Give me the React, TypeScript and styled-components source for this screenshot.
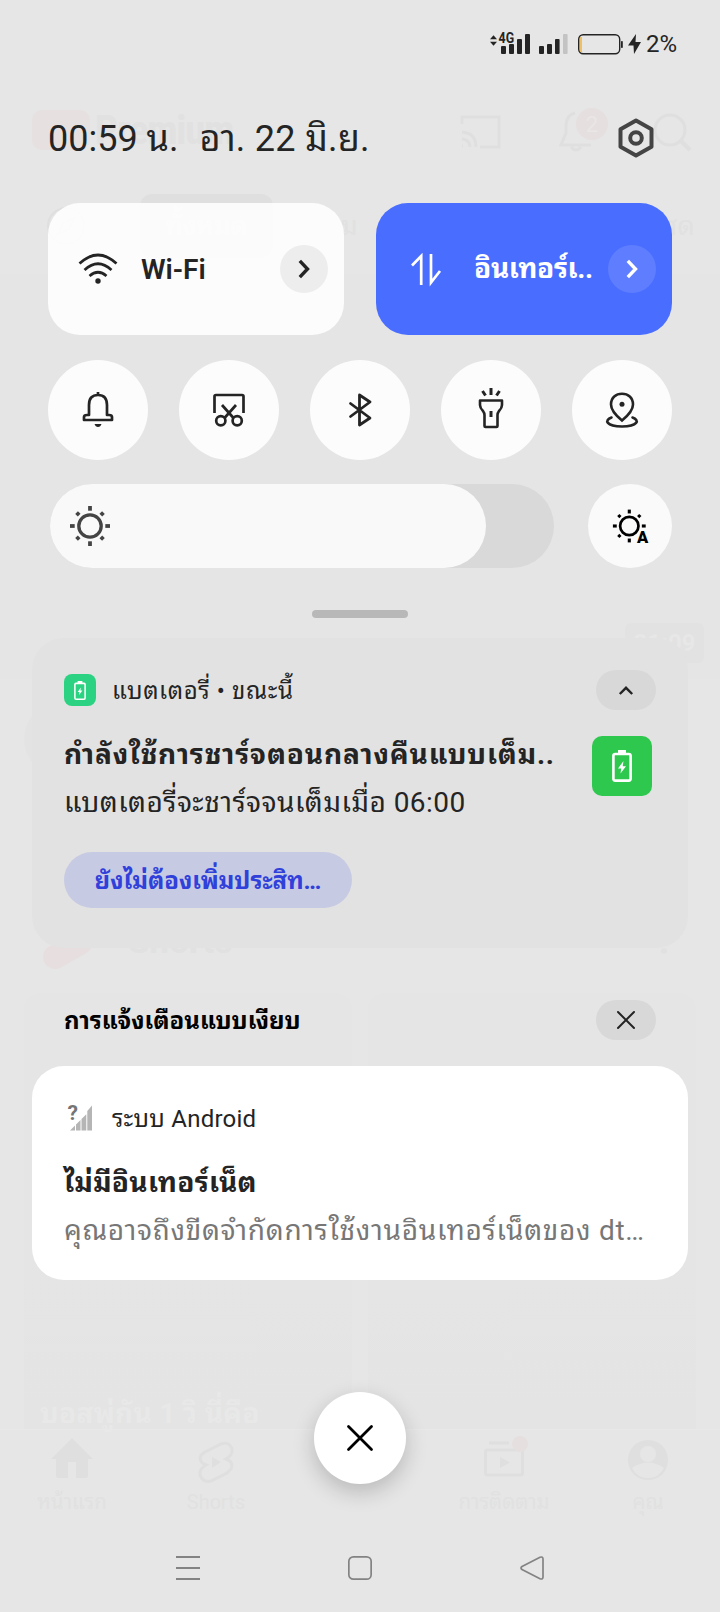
import React from 'react';
import styled, { createGlobalStyle } from 'styled-components';

const GlobalStyle = createGlobalStyle`
  * { box-sizing: border-box; }
  body {
    margin: 0;
    background: #e6e6e6;
    font-family: Roboto, 'Noto Looped Thai', 'Noto Sans Thai Looped', 'Noto Sans Thai', 'Noto Sans', sans-serif;
    color: #242424;
  }
  svg { display: block; flex: none; overflow: visible; }
`;

const Screen = styled.main`
  position: relative;
  width: 720px;
  height: 1612px;
  overflow: hidden;
  background: #e6e6e6;
`;

const Label = styled.span<{ $size: number; $weight?: number; $track?: number; $color?: string }>`
  display: block;
  white-space: nowrap;
  font-size: ${(p) => p.$size}px;
  font-weight: ${(p) => p.$weight ?? 400};
  letter-spacing: ${(p) => p.$track ?? 0}px;
  line-height: 40px;
  height: 40px;
  color: ${(p) => p.$color ?? 'inherit'};
`;

/* ---------- dimmed application behind the shade ---------- */

const Backdrop = styled.div`
  position: absolute;
  inset: 0;
  display: flex;
  flex-direction: column;
  color: #e1e1e1;
`;

const AppBar = styled.div`
  display: flex;
  align-items: center;
  height: 84px;
  margin-top: 88px;
  padding-left: 32px;
`;

const AppLogo = styled.div`
  width: 58px;
  height: 40px;
  border-radius: 10px;
  background: #e7e0e0;
  margin-right: 5px;
`;

const Brand = styled.div`
  width: 365px;
  font: 700 41px/40px 'Roboto Condensed', Roboto, sans-serif;
  letter-spacing: -1.3px;
`;

const ChipBar = styled.div`
  display: flex;
  align-items: center;
  height: 102px;
  padding: 6px 0 0 46px;
`;

const ActiveChip = styled.div`
  display: flex;
  align-items: center;
  justify-content: center;
  width: 133px;
  height: 64px;
  margin: 0 42px 0 54px;
  border-radius: 12px;
  background: #dfdfdf;
  color: #e4e4e4;
`;

const ChipGap = styled.div`
  width: 304px;
`;

const Video = styled.div`
  display: flex;
  align-items: flex-end;
  justify-content: flex-end;
  height: 405px;
  padding: 0 16px 16px;
  background: #e5e5e5;
`;

const Duration = styled.div`
  display: flex;
  align-items: center;
  justify-content: center;
  width: 79px;
  height: 40px;
  border-radius: 6px;
  background: #e2e2e2;
  color: #e7e7e7;
`;

const Channel = styled.div`
  height: 235px;
  padding: 24px;
`;

const Avatar = styled.div`
  width: 72px;
  height: 72px;
  border-radius: 50%;
  background: #e3e3e3;
`;

const ShelfTitle = styled.div`
  display: flex;
  align-items: flex-start;
  height: 79px;
  padding-left: 42px;
`;

const Shelf = styled.div`
  display: grid;
  grid-template-columns: 328px 328px;
  gap: 16px;
  height: 436px;
  padding: 0 24px;
`;

const Thumb = styled.div`
  display: flex;
  align-items: flex-end;
  padding: 0 16px;
  border-radius: 16px 16px 0 0;
  background: linear-gradient(#e5e5e5 60%, #e4e4e4);
  color: #e8e8e8;
`;

const ThumbTitle = styled.div`
  margin-bottom: -5px;
`;

const TabBar = styled.div`
  display: grid;
  grid-template-columns: repeat(5, 1fr);
  border-top: 1px solid #e8e8e8;
  padding-top: 8px;
`;

const Tab = styled.div`
  display: flex;
  flex-direction: column;
  align-items: center;
`;

/* ---------- notification shade ---------- */

const Shade = styled.div`
  position: relative;
  display: flex;
  flex-direction: column;
  height: 100%;
`;

const StatusBar = styled.div`
  display: flex;
  align-items: flex-start;
  height: 64px;
  padding: 33px 0 0 490px;
`;

const BatteryLevel = styled.div`
  margin: -9px 0 0 5px;
`;

const Header = styled.header`
  display: flex;
  align-items: center;
  justify-content: space-between;
  height: 80px;
  margin-top: 34px;
  padding: 0 66px 0 48px;
`;

const DateTime = styled.div`
  display: flex;
  gap: 21px;
  padding-top: 2px;
`;

const Tiles = styled.section`
  display: grid;
  grid-template-columns: 296px 296px;
  gap: 32px;
  padding: 0 48px;
  margin-top: 25px;
`;

const Tile = styled.div<{ $active?: boolean }>`
  display: flex;
  align-items: center;
  height: 132px;
  padding: 0 16px 0 28px;
  border-radius: 32px;
  background: ${(p) => (p.$active ? '#496dff' : 'rgba(255, 255, 255, 0.88)')};
  color: ${(p) => (p.$active ? '#fff' : '#242424')};
`;

const TileLabel = styled.div<{ $start: number; $top?: number }>`
  flex: 1;
  min-width: 0;
  padding: ${(p) => p.$top ?? 0}px 0 0 ${(p) => p.$start}px;
`;

const TileMore = styled.div<{ $active?: boolean }>`
  display: grid;
  place-items: center;
  width: 48px;
  height: 48px;
  border-radius: 50%;
  background: ${(p) => (p.$active ? '#5f7eff' : '#ededed')};
`;

const Toggles = styled.section`
  display: flex;
  justify-content: space-between;
  padding: 0 48px;
  margin-top: 25px;
`;

const Round = styled.div<{ $size: number }>`
  display: grid;
  place-items: center;
  width: ${(p) => p.$size}px;
  height: ${(p) => p.$size}px;
  border-radius: 50%;
  background: ${(p) => (p.$size > 90 ? '#fcfcfc' : '#fafafa')};
`;

const Brightness = styled.section`
  display: flex;
  justify-content: space-between;
  margin-top: 24px;
  padding: 0 48px 0 50px;
`;

const Track = styled.div`
  width: 504px;
  height: 84px;
  border-radius: 42px;
  background: #d9d9d9;
`;

const Fill = styled.div`
  display: flex;
  align-items: center;
  width: 436px;
  height: 84px;
  padding-left: 20px;
  border-radius: 42px;
  background: #f9f9f9;
`;

const Handle = styled.div`
  width: 96px;
  height: 8px;
  margin: 42px auto 0;
  border-radius: 4px;
  background: #b8b8b8;
`;

const Card = styled.article<{ $solid?: boolean }>`
  margin: ${(p) => (p.$solid ? '26px' : '20px')} 32px 0;
  height: ${(p) => (p.$solid ? '214px' : '310px')};
  padding: 32px;
  border-radius: 32px;
  background: ${(p) => (p.$solid ? '#fff' : '#e2e2e2')};
`;

const CardHead = styled.div`
  display: flex;
  align-items: center;
  height: 40px;
`;

const Source = styled.div`
  flex: 1;
  padding: 2px 0 0 16px;
`;

const AppIcon = styled.div<{ $large?: boolean }>`
  display: grid;
  place-items: center;
  flex: none;
  width: ${(p) => (p.$large ? 60 : 32)}px;
  height: ${(p) => (p.$large ? 60 : 32)}px;
  margin-top: ${(p) => (p.$large ? 1 : 0)}px;
  border-radius: ${(p) => (p.$large ? 10 : 8)}px;
  background: ${(p) => (p.$large ? '#2dc84d' : '#2bd281')};
`;

const Pill = styled.div`
  display: grid;
  place-items: center;
  width: 60px;
  height: 40px;
  border-radius: 20px;
  background: #d8d8d8;
`;

const CardBody = styled.div`
  display: flex;
  justify-content: space-between;
  margin-top: 25px;
  padding-right: 4px;
`;

const Lines = styled.div`
  display: flex;
  flex-direction: column;
  gap: 8px;
`;

const Action = styled.div`
  display: flex;
  align-items: center;
  justify-content: center;
  width: 288px;
  height: 56px;
  margin-top: 29px;
  padding-top: 2px;
  border-radius: 28px;
  background: #c6cae3;
`;

const SilentHead = styled.div`
  display: flex;
  align-items: center;
  justify-content: space-between;
  height: 40px;
  margin-top: 52px;
  padding: 0 64px;
`;

const SilentTitle = styled.div`
  padding-top: 2px;
`;

const CloseAll = styled.div`
  display: grid;
  place-items: center;
  width: 92px;
  height: 92px;
  margin: 112px auto 0;
  border-radius: 50%;
  background: #fff;
  box-shadow: 0 8px 22px rgba(0, 0, 0, 0.2);
`;

const SystemNav = styled.nav`
  display: flex;
  justify-content: space-between;
  margin-top: 72px;
  padding: 0 176px;
`;

const Cross = ({ size, width }: { size: number; width: number }) => (
  <svg width={size} height={size} viewBox={`0 0 ${size} ${size}`} fill="none" stroke="currentColor" strokeWidth={width} strokeLinecap="round">
    <path d={`M1 1L${size - 1} ${size - 1}M${size - 1} 1L1 ${size - 1}`} />
  </svg>
);

const Chevron = () => (
  <svg width="12" height="20" viewBox="0 0 12 20" fill="none" stroke="currentColor" strokeWidth="3.4">
    <path d="M1.800 1.900L9.500 10L1.800 18.100" />
  </svg>
);

const RAYS = [0, 45, 90, 135, 180, 225, 270, 315];

const Sun = ({ auto }: { auto?: boolean }) => (
  <svg width="40" height="40" viewBox="-20 -20 40 40" fill="none" stroke={auto ? '#000' : '#444'} strokeWidth="3.3">
    <g transform={auto ? 'translate(-.7 0) scale(.82)' : undefined}>
      <circle r="11.2" />
      {RAYS.filter((a) => !(auto && a === 135)).map((a) => (
        <path key={a} d={a % 90 ? 'M0 -15.3V-19' : 'M0 -15.3V-20'} strokeWidth="3.8" transform={`rotate(${a})`} />
      ))}
    </g>
    {auto && (
      <text x="7" y="16.500" fontSize="16.500" fontWeight="900" fill="#000" stroke="none">A</text>
    )}
  </svg>
);

const BatteryIcon = ({ large }: { large?: boolean }) => (
  <svg width={large ? 20 : 12} height={large ? 32 : 19} viewBox="0 0 20 32" fill="none" stroke="#fff" strokeWidth="2.6">
    <rect x="1.4" y="4" width="17.2" height="26.6" rx="1.8" />
    <path d="M6 1.8H14" strokeWidth="3.6" />
    <path d="M11.5 11L6 18.4H9.2L8.5 23.5L14 16.2H10.7Z" fill="#fff" stroke="none" />
  </svg>
);

const StatusIcons = () => (
  <svg width="151" height="22" viewBox="490 33 151 22" fill="#242424">
    <path d="M490 40L493.500 36L497 40ZM490 42.500H497L493.500 46.500Z" transform="translate(0 -.7)" />
    <text x="498.600" y="42.700" fontSize="14" fontWeight="700" textLength="15.500" lengthAdjust="spacingAndGlyphs">4G</text>
    <rect x="501" y="46" width="5" height="8" rx="1" />
    <rect x="509" y="44" width="5" height="10" rx="1" />
    <rect x="517" y="39" width="5" height="15" rx="1" />
    <rect x="525" y="34" width="5" height="20" rx="1" />
    <rect x="539" y="46" width="5" height="8" rx="1" />
    <rect x="547" y="44" width="5" height="10" rx="1" />
    <rect x="555" y="39" width="4.600" height="15" rx="1" />
    <rect x="563" y="34" width="4.600" height="20" rx="1" fill="#c3c3c3" />
    <rect x="578.700" y="34.700" width="41" height="19" rx="4.500" fill="none" stroke="#242424" strokeWidth="1.400" />
    <rect x="580" y="37" width="2" height="15" fill="#eec166" />
    <rect x="621" y="41" width="1.800" height="7" rx=".8" />
    <path d="M636 34L628 45.500H633.500L634 54L641 42H635.500Z" />
  </svg>
);

const App = () => (
  <Screen lang="th">
    <GlobalStyle />
    <Backdrop aria-hidden>
      <AppBar>
        <AppLogo />
        <Brand>Premium</Brand>
        <svg width="260" height="44" viewBox="460 106 260 44" fill="none" stroke="#dfdfdf" strokeWidth="3">
          <path d="M462 122V115H499V145H480M462 144H463M462 137Q470 138 470 145M462 130Q476 131 476 145" />
          <path d="M575 111Q566 113 566 124V131L561 143H591M571 145Q576 151 581 145" />
          <circle cx="592" cy="122" r="16" fill="#e6dfdf" stroke="none" />
          <text x="592" y="130" fontSize="22" fill="#e9e6e6" stroke="none" textAnchor="middle">2</text>
          <circle cx="670" cy="128" r="15" />
          <path d="M680 138L690 148" strokeWidth="4" />
        </svg>
      </AppBar>
      <ChipBar>
        <svg width="40" height="40" viewBox="-20 -20 40 40" fill="none" stroke="#dfdfdf" strokeWidth="2">
          <circle r="18" />
          <path d="M9 -9L3 3L-9 9L-3 -3Z" />
        </svg>
        <ActiveChip><Label $size={26} $weight={500}>ทั้งหมด</Label></ActiveChip>
        <Label $size={27}>เกม</Label>
        <ChipGap />
        <Label $size={27}>สด</Label>
      </ChipBar>
      <Video><Duration><Label $size={24} $weight={700}>21:09</Label></Duration></Video>
      <Channel><Avatar /></Channel>
      <ShelfTitle>
        <svg width="88" height="60" viewBox="42 914 88 60"><path d="M55 957L80 943" stroke="#e7dfdf" strokeWidth="24" strokeLinecap="round" /></svg>
        <svg width="540" height="60" viewBox="130 914 540 60" fill="#e1e1e1">
          <text x="128" y="952.500" fontSize="35" fontWeight="700">Shorts</text>
          <circle cx="664" cy="951" r="3" />
        </svg>
      </ShelfTitle>
      <Shelf>
        <Thumb><ThumbTitle><Label $size={28} $weight={700} $track={0.3}>บอสพู่กัน 1 วิ นี่คือ</Label></ThumbTitle></Thumb>
        <Thumb />
      </Shelf>
      <TabBar>
        <Tab>
          <svg width="42" height="44" viewBox="0 0 42 44" fill="#dfdfdf"><path d="M21 0L42 21H37V38Q37 40 35 40H25V24H17V40H7Q5 40 5 38V21H0Z" /></svg>
          <Label $size={20.5}>หน้าแรก</Label>
        </Tab>
        <Tab>
          <svg width="36" height="44" viewBox="0 0 36 44" fill="none" stroke="#dfdfdf" strokeWidth="3">
            <path d="M7 14L23 6Q31 3 34 11Q35 17 28 21Q36 24 33 31L29 35L13 43Q5 45 2 37Q1 31 8 27Q0 24 3 17Z" />
            <path d="M14 19V30L23 24Z" fill="#dfdfdf" stroke="none" />
          </svg>
          <Label $size={20}>Shorts</Label>
        </Tab>
        <Tab />
        <Tab>
          <svg width="40" height="44" viewBox="0 0 40 44" fill="none" stroke="#dfdfdf" strokeWidth="3">
            <rect x="1.500" y="12" width="37" height="25" rx="2" />
            <path d="M5 5H25" />
            <path d="M16 19V30L26 24.500Z" fill="#dfdfdf" stroke="none" />
            <circle cx="36" cy="6" r="8" fill="#e6dfdf" stroke="none" />
          </svg>
          <Label $size={20.5}>การติดตาม</Label>
        </Tab>
        <Tab>
          <svg width="40" height="44" viewBox="0 0 40 44" fill="#dfdfdf">
            <circle cx="20" cy="22" r="20" />
            <circle cx="20" cy="16" r="8" fill="#e6e6e6" />
            <path d="M4 30Q20 19 36 30Q31 40 20 40Q9 40 4 30Z" fill="#e6e6e6" />
          </svg>
          <Label $size={20.5}>คุณ</Label>
        </Tab>
      </TabBar>
    </Backdrop>

    <Shade>
      <StatusBar>
        <StatusIcons />
        <BatteryLevel><Label $size={24}>2%</Label></BatteryLevel>
      </StatusBar>
      <Header>
        <DateTime>
          <Label $size={36}>00:59 น.</Label>
          <Label $size={36} $track={0.25}>อา. 22 มิ.ย.</Label>
        </DateTime>
        <svg width="36" height="40" viewBox="0 0 36 40" fill="none" stroke="#444" strokeWidth="4" strokeLinejoin="round">
          <path d="M18 2.500L33.500 11.200V28.800L18 37.500L2.500 28.800V11.200Z" />
          <circle cx="18" cy="20" r="5.800" />
        </svg>
      </Header>

      <Tiles>
        <Tile>
          <svg width="44" height="36" viewBox="0 0 44 36" fill="none" stroke="#242424" strokeWidth="2.700">
            <path d="M3.500 12.500Q22 -4.500 40.500 12.500M8.500 19Q22 6.500 35.500 19M13.500 25Q22 17.500 30.500 25" />
            <circle cx="22" cy="30" r="2.700" fill="#242424" stroke="none" />
          </svg>
          <TileLabel $start={21} $top={2}><Label $size={28} $weight={600}>Wi-Fi</Label></TileLabel>
          <TileMore><Chevron /></TileMore>
        </Tile>
        <Tile $active>
          <svg width="44" height="36" viewBox="0 0 44 36" fill="none" stroke="#fff" strokeWidth="2.700">
            <path d="M8 14.500L17.200 5V34M27 3V31.500L36 20" />
          </svg>
          <TileLabel $start={26}><Label $size={28} $weight={700} $track={-0.35}>อินเทอร์เ..</Label></TileLabel>
          <TileMore $active><Chevron /></TileMore>
        </Tile>
      </Tiles>

      <Toggles>
        <Round $size={100}>
          <svg width="32" height="36" viewBox="0 0 32 36" fill="none" stroke="#242424" strokeWidth="2.700" strokeLinejoin="round">
            <path d="M16 0V3M7 23V13Q7 3 16 3Q25 3 25 13V23H27Q30 23 30 25V28H2V25Q2 23 5 23Z" />
            <path d="M12.500 32H19.500Q18.500 35 16 35Q13.500 35 12.500 32Z" fill="#242424" stroke="none" />
          </svg>
        </Round>
        <Round $size={100}>
          <svg width="34" height="36" viewBox="0 0 34 36" fill="none" stroke="#242424" strokeWidth="2.700">
            <path d="M2.500 21V4.500Q2.500 3 4 3H30Q31.500 3 31.500 4.500V21M10 13L21.500 26M24 13L12.500 26" />
            <circle cx="8.800" cy="28.700" r="4.600" />
            <circle cx="25.200" cy="28.700" r="4.600" />
          </svg>
        </Round>
        <Round $size={100}>
          <svg width="24" height="36" viewBox="0 0 24 36" fill="none" stroke="#242424" strokeWidth="2.800" strokeLinejoin="round" strokeLinecap="round">
            <path d="M2.500 11.500L22 26L11.500 33V3L22 10L2.500 24.500" />
          </svg>
        </Round>
        <Round $size={100}>
          <svg width="26" height="42" viewBox="0 2 26 42" fill="none" stroke="#242424" strokeWidth="2.600" strokeLinejoin="round">
            <path d="M2 13.500H24V18Q24 21 21 24Q19.500 26 19.500 28V39Q19.500 40 18.500 40H7.500Q6.500 40 6.500 39V28Q6.500 26 5 24Q2 21 2 18Z" />
            <path d="M13 24V30M13 1V8M4.500 4L7.500 8.500M21.500 4L18.500 8.500" strokeWidth="3" />
          </svg>
        </Round>
        <Round $size={100}>
          <svg width="34" height="36" viewBox="0 0 34 36" fill="none" stroke="#242424" strokeWidth="2.600" strokeLinecap="round">
            <path d="M17 28.500Q6 19.500 6 12.500C6 5.500 11 1.800 17 1.800C23 1.800 28 5.500 28 12.500Q28 19.500 17 28.500Z" />
            <circle cx="17" cy="12.300" r="2.500" fill="#242424" stroke="none" />
            <path d="M6.500 25.500C-1 28 1 34.500 17 34.500C33 34.500 35 28 27.500 25.500" />
          </svg>
        </Round>
      </Toggles>

      <Brightness>
        <Track><Fill><Sun /></Fill></Track>
        <Round $size={84}><Sun auto /></Round>
      </Brightness>
      <Handle />

      <Card>
        <CardHead>
          <AppIcon><BatteryIcon /></AppIcon>
          <Source><Label $size={24} $track={0.6}>แบตเตอรี่ • ขณะนี้</Label></Source>
          <Pill>
            <svg width="14" height="9" viewBox="0 0 14 9" fill="none" stroke="#242424" strokeWidth="2.400"><path d="M.8 8L7 1.800L13.200 8" /></svg>
          </Pill>
        </CardHead>
        <CardBody>
          <Lines>
            <Label $size={28} $weight={700} $track={0.85}>กำลังใช้การชาร์จตอนกลางคืนแบบเต็ม..</Label>
            <Label $size={28} $track={0.45}>แบตเตอรี่จะชาร์จจนเต็มเมื่อ 06:00</Label>
          </Lines>
          <AppIcon $large><BatteryIcon large /></AppIcon>
        </CardBody>
        <Action><Label $size={24} $weight={700} $color="#3040da">ยังไม่ต้องเพิ่มประสิท…</Label></Action>
      </Card>

      <SilentHead>
        <SilentTitle><Label $size={24} $weight={700} $color="#000">การแจ้งเตือนแบบเงียบ</Label></SilentTitle>
        <Pill><Cross size={18} width={2} /></Pill>
      </SilentHead>

      <Card $solid>
        <CardHead>
          <svg width="32" height="32" viewBox="64 1102 32 32" fill="#b5b5b5">
            <path d="M70 1130.500L75 1125.500V1130.500ZM76 1124.500L80.500 1120V1130.500H76ZM81.500 1119L86.300 1114.200V1130.500H81.500ZM87.300 1111L92 1105.500V1130.500H87.300Z" />
            <text x="67.500" y="1119.500" fontSize="21" fontWeight="700" fill="#757575">?</text>
          </svg>
          <Source><Label $size={24} $track={0.25}>ระบบ Android</Label></Source>
        </CardHead>
        <CardBody>
          <Lines>
            <Label $size={28} $weight={700} $track={0.25}>ไม่มีอินเทอร์เน็ต</Label>
            <Label $size={28} $color="#777" $track={0.7}>คุณอาจถึงขีดจำกัดการใช้งานอินเทอร์เน็ตของ dt…</Label>
          </Lines>
        </CardBody>
      </Card>

      <CloseAll><svg width="26" height="26" viewBox="0 0 26 26" stroke="#000" strokeWidth="2.800" strokeLinecap="round"><path d="M1.500 1.500L24.500 24.500M24.500 1.500L1.500 24.500" /></svg></CloseAll>

      <SystemNav>
        <svg width="24" height="24" viewBox="0 0 24 24" stroke="#838383" strokeWidth="2"><path d="M0 1H24M0 12H24M0 23H24" /></svg>
        <svg width="24" height="24" viewBox="0 0 24 24" fill="none" stroke="#838383" strokeWidth="1.700"><rect x=".85" y=".85" width="22.300" height="22.300" rx="4.500" /></svg>
        <svg width="24" height="24" viewBox="0 0 24 24" fill="none" stroke="#838383" strokeWidth="1.700"><path d="M2 10.500L20 1.300Q23 .3 23 3V21Q23 23.700 20 22.700L2 13.500Q0 12 2 10.500Z" /></svg>
      </SystemNav>
    </Shade>
  </Screen>
);

export default App;
